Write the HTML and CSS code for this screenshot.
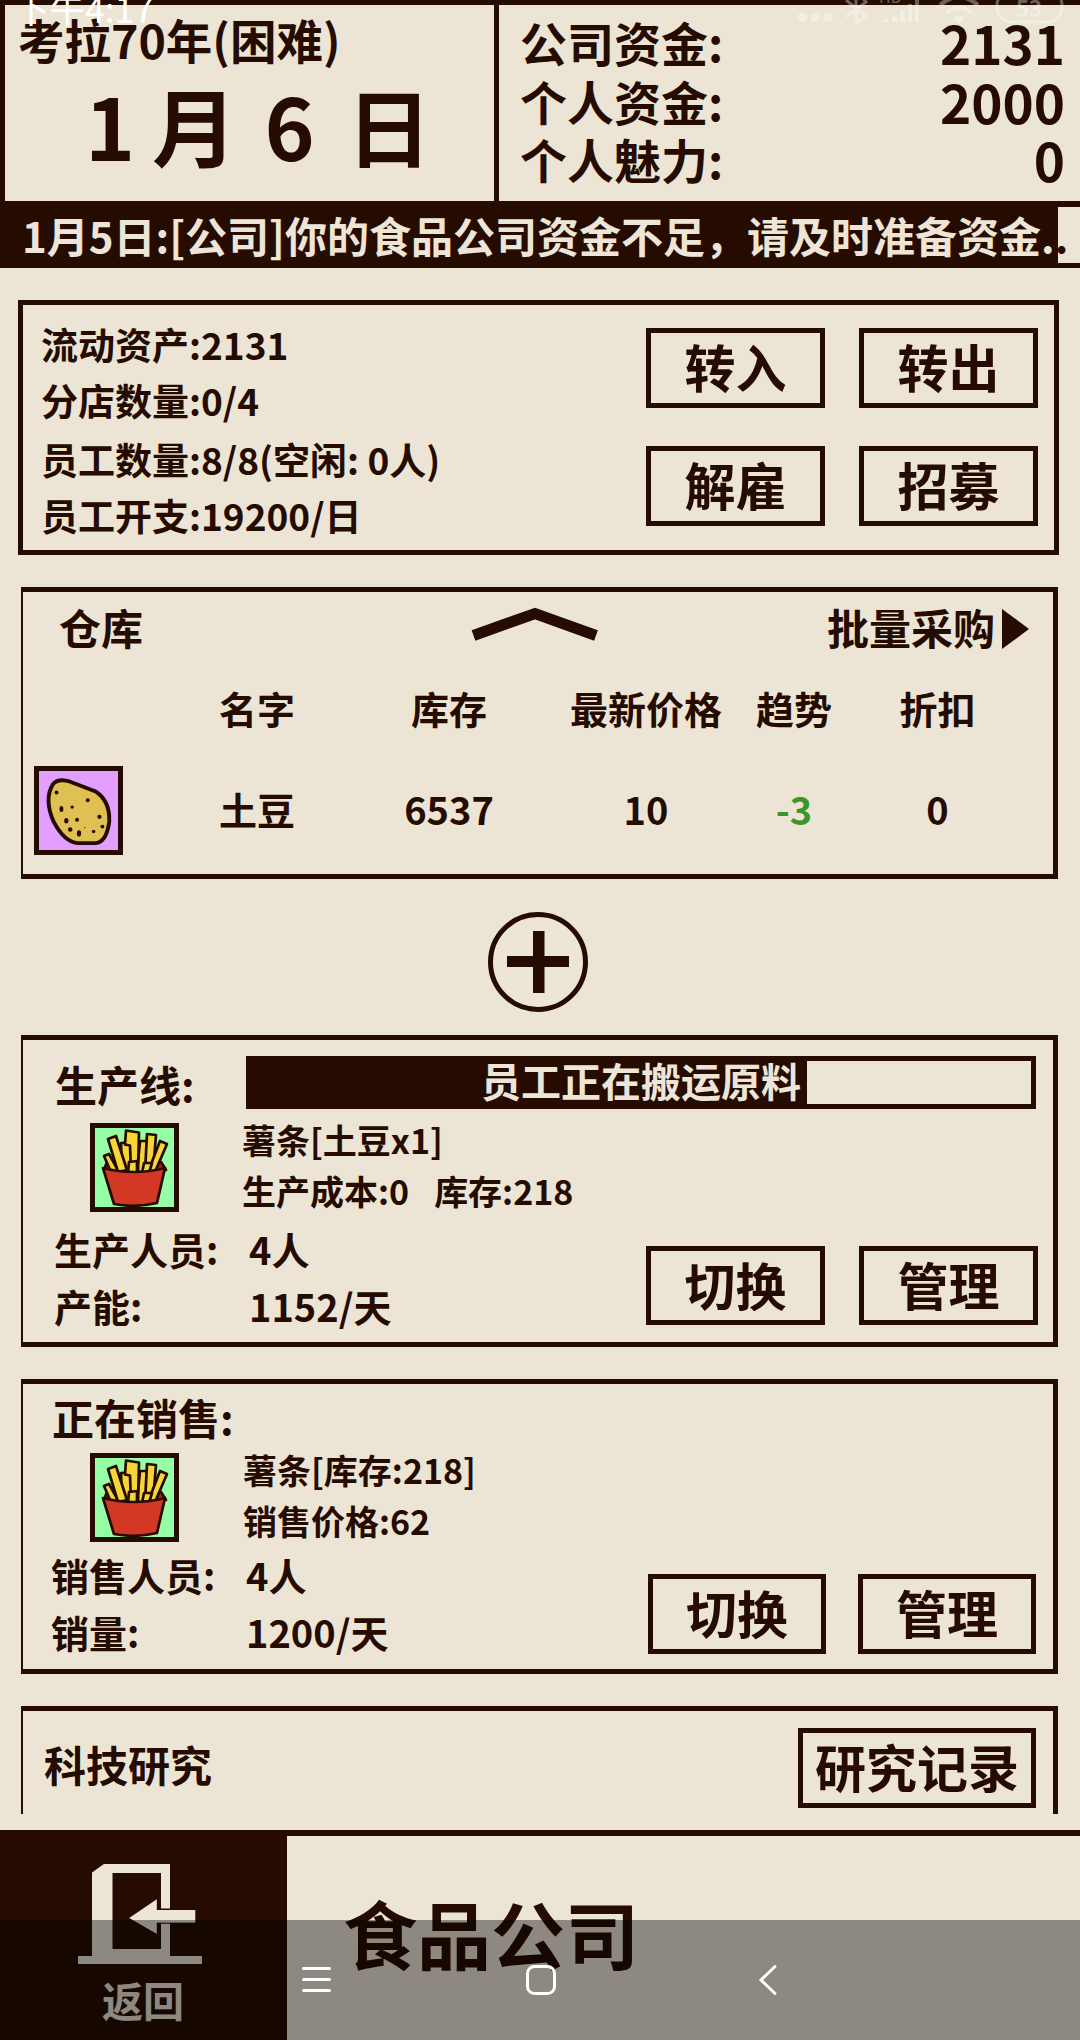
FILE: index.html
```html
<!DOCTYPE html>
<html lang="zh-CN">

<head>
  <meta charset="UTF-8">
  <meta name="viewport" content="width=device-width, initial-scale=1.0">
  <title>食品公司</title>
  <link rel="stylesheet" href="styles.css">
</head>

<body>
  <!-- Shared drawings -->
  <svg class="defs" width="0" height="0">
    <symbol id="fries" viewBox="0 0 79 79">
      <g stroke="#260c00" stroke-width="2.700" stroke-linejoin="round">
        <path fill="#a82418" d="M9 42l3-8h54l5 8z" />
        <g fill="#f6d536">
          <path d="M9 28l5-2 10 18h-8z" />
          <path d="M26 15l12-1 2 32H27z" />
          <path d="M45 13h8l-2 31h-9z" />
          <path d="M31 2.500l13 2-1 39h-7l-1-26-5-1z" />
          <path d="M13 11l8-3 11 34-9 2z" />
          <path d="M52 6l9 1-3 37h-8z" />
          <path d="M65 13l7 3-12 28h-7z" />
          <path d="M34 34l8-1v12h-9z" />
          <path d="M49 35h8l-3 10h-7z" />
        </g>
        <path fill="#d23824" d="M8 40q31 8 62 0l-8 35q-22 5-43 1z" />
      </g>
    </symbol>
  </svg>

  <div class="screen">
    <header class="header">
      <section class="date-box">
        <p class="year">考拉70年(困难)</p>
        <p class="date"><span>1</span><span>月</span><span>6</span><span>日</span></p>
      </section>
      <section class="funds">
        <p><span>公司资金:</span><b>2131</b></p>
        <p><span>个人资金:</span><b>2000</b></p>
        <p><span>个人魅力:</span><b>0</b></p>
      </section>
    </header>

    <div class="ticker"><p>1月5日:[公司]你的食品公司资金不足，请及时准备资金<span>.</span><span class="dot">.</span></p></div>

    <main class="content">
      <section class="panel overview">
        <div class="stats">
          <p>流动资产:2131</p>
          <p>分店数量:0/4</p>
          <p>员工数量:8/8(空闲: 0人)</p>
          <p>员工开支:19200/日</p>
        </div>
        <div class="actions">
          <button>转入</button>
          <button>转出</button>
          <button>解雇</button>
          <button>招募</button>
        </div>
      </section>

      <section class="panel thin warehouse">
        <div class="warehouse-head">
          <h2>仓库</h2>
          <svg class="chevron" viewBox="0 0 128 36" width="128" height="36">
            <path d="M2.500 29.500L64 7.500L125 29.500" fill="none" stroke="#260c00" stroke-width="11" />
          </svg>
          <h2 class="bulk">批量采购<svg viewBox="0 0 27 40" width="27" height="40"><path d="M0 0l27 20L0 40z" fill="#260c00" /></svg></h2>
        </div>
        <div class="goods goods-title">
          <span></span><span>名字</span><span>库存</span><span>最新价格</span><span>趋势</span><span>折扣</span>
        </div>
        <div class="goods">
          <div class="icon potato">
            <svg viewBox="0 0 79 81" width="79" height="79">
              <path d="M13 14Q18 7 31 11L57 21Q72 31 71 52Q68 74 56 74H39Q25 73 14 52Q4 29 13 14Z" fill="#dfc052" stroke="#260c00" stroke-width="4" />
              <g fill="#260c00">
                <circle cx="17" cy="22" r="2" /><circle cx="49" cy="30" r="2" /><circle cx="33" cy="37" r="1.700" />
                <ellipse cx="22" cy="39" rx="2" ry="3" /><ellipse cx="27" cy="51" rx="2.200" ry="2.800" /><circle cx="38" cy="50" r="2" />
                <circle cx="61" cy="47" r="2.200" /><circle cx="64" cy="57" r="2" /><circle cx="55" cy="62" r="1.800" />
                <circle cx="31" cy="60" r="2.300" /><ellipse cx="40" cy="64" rx="2.200" ry="3.200" /><circle cx="46" cy="58" r=".6" />
              </g>
            </svg>
          </div>
          <span>土豆</span><span>6537</span><span>10</span><span class="down">-3</span><span>0</span>
        </div>
      </section>

      <svg class="add" viewBox="0 0 100 100" width="100" height="100">
        <circle cx="50" cy="50" r="47.500" fill="#ece5d8" stroke="#260c00" stroke-width="5" />
        <path d="M19 44h62v11H19zM45 19h11.500v62H45z" fill="#260c00" />
      </svg>

      <section class="panel thin line">
        <div class="line-head">
          <h2>生产线:</h2>
          <div class="progress">
            <div class="bar" style="width: 71.300%"></div>
            <span>员工正在搬运原料</span>
          </div>
        </div>
        <div class="product">
          <div class="icon"><svg width="79" height="79"><use href="#fries" /></svg></div>
          <div>
            <p>薯条[土豆x1]</p>
            <p>生产成本:0<span class="stock">库存:218</span></p>
          </div>
        </div>
        <div class="line-foot">
          <div class="pairs">
            <span>生产人员:</span><span>4人</span>
            <span>产能:</span><span>1152/天</span>
          </div>
          <div class="buttons">
            <button>切换</button>
            <button>管理</button>
          </div>
        </div>
      </section>

      <section class="panel thin sale">
        <h2>正在销售:</h2>
        <div class="product">
          <div class="icon"><svg width="79" height="79"><use href="#fries" /></svg></div>
          <div>
            <p>薯条[库存:218]</p>
            <p>销售价格:62</p>
          </div>
        </div>
        <div class="line-foot">
          <div class="pairs">
            <span>销售人员:</span><span>4人</span>
            <span>销量:</span><span>1200/天</span>
          </div>
          <div class="buttons">
            <button>切换</button>
            <button>管理</button>
          </div>
        </div>
      </section>

      <section class="panel thin research">
        <h2>科技研究</h2>
        <button>研究记录</button>
      </section>
    </main>

    <footer class="footer">
      <div class="back">
        <svg viewBox="0 0 124 100" width="124" height="100">
          <path fill="#ece5d8" fill-rule="evenodd" d="M14 8.500L26 0H92V92H124V100H0V92H14ZM34.500 9V85H83V9Z" />
          <path fill="#ece5d8" stroke="#260c00" stroke-width="1.400" d="M50 54L79.500 34V45.300H118V59H79.500V71Z" />
          <path fill="#ece5d8" d="M79 46h38v12.500H79z" />
        </svg>
        <span>返回</span>
      </div>
      <h1>食品公司</h1>
    </footer>

    <!-- Phone status bar, half cut off at the top -->
    <div class="status">
      <span>下午4:17</span>
      <svg viewBox="0 0 270 26" width="270" height="26" fill="none" stroke="#fff" stroke-width="3">
        <g fill="#fff" stroke="none">
          <circle cx="7" cy="17.500" r="4.700" /><circle cx="20" cy="17.500" r="4.700" /><circle cx="33" cy="17.500" r="4.700" />
          <path d="M86 22l7-5v5zM97 15h5v7h-5zM105 10h5v12h-5zM113 4h4v18h-4zM120 0h4v22h-4z" />
          <path d="M164 24l-6-6q6-4 12 0z" />
          <text x="84" y="3" font-size="16">HD</text>
          <text x="221" y="17" font-size="22" font-weight="bold">53</text>
        </g>
        <path d="M51 0L71 16L61 24V-10L71 2L51 17" />
        <path d="M151 13q13-11 26 0M145 5q19-16 38 0" stroke-width="4" />
        <rect x="202" y="-10" width="65" height="32" rx="15" />
      </svg>
    </div>

    <nav class="navbar">
      <svg viewBox="0 0 1080 120" width="1080" height="120" fill="none" stroke="#fff" stroke-width="3" stroke-linecap="round">
        <path d="M303.500 48.500h26M303.500 59.500h26M303.500 70.500h26" />
        <rect x="527.500" y="46.500" width="27" height="27" rx="7" />
        <path d="M775 46.500L761 60L775 73.500" />
      </svg>
    </nav>
  </div>
</body>

</html>
```
FILE: styles.css
```css
* {
  box-sizing: border-box;
}

body {
  margin: 0;
  font-family: "Noto Sans CJK SC", sans-serif;
  font-weight: bold;
  color: #260c00;
  background-color: #ece5d5;
}

p,
h1,
h2 {
  margin: 0;
  white-space: nowrap;
}

svg {
  display: block;
}

.defs {
  position: absolute;
}

.screen {
  position: relative;
  width: 1080px;
  height: 2040px;
  overflow: hidden;
  display: flex;
  flex-direction: column;
}

/* Header */
.header {
  display: flex;
  height: 201px;
  border-top: 5px solid #260c00;
  border-left: 5px solid #260c00;
}

.date-box {
  width: 494px;
  border-right: 5px solid #260c00;
}

.year {
  padding: 4px 0 0 13px;
  font-size: 46.500px;
  line-height: 60px;
}

.date {
  display: grid;
  grid-template-columns: 84px 85px 105px 94px;
  padding-left: 63px;
  font-size: 85px;
  line-height: 110px;
  text-align: center;
}

.funds {
  flex: 1;
  padding: 8px 15px 0 21px;
}

.funds p {
  display: flex;
  justify-content: space-between;
  font-size: 47px;
  line-height: 58.500px;
}

.funds b {
  font-size: 53px;
  font-weight: bold;
}

/* News ticker */
.ticker {
  height: 67px;
  border: 6px solid #260c00;
  border-right: 0;
  border-bottom-width: 5px;
  background: linear-gradient(to right, #260c00 1052px, #ece5d5 1052px);
}

.ticker p {
  padding-left: 16px;
  font-size: 42px;
  line-height: 56px;
  color: #ece5d8;
}

.ticker .dot {
  color: #260c00;
}

/* Panels */
.content {
  height: 1546px;
  padding-top: 32px;
  overflow: hidden;
}

.panel {
  margin: 0 22px 32px 21px;
  border: 5px solid #260c00;
}

.thin {
  border-left-width: 2px;
}

h2 {
  font-size: 42px;
  line-height: 50px;
}

button {
  width: 179px;
  height: 80px;
  padding: 0 0 4px;
  border: 5px solid #260c00;
  background: none;
  color: #260c00;
  font-family: inherit;
  font-size: 51px;
  font-weight: bold;
  line-height: 66px;
}

.icon {
  width: 89px;
  height: 89px;
  border: 5px solid #260c00;
  background-color: #96ffa5;
}

.overview {
  display: flex;
  justify-content: space-between;
  height: 255px;
  margin-left: 18px;
  margin-right: 21px;
  padding: 12px 16px 0 18px;
}

.stats {
  display: grid;
  grid-template-rows: 53px 59px 59px 53px;
  align-items: center;
  font-size: 37px;
  line-height: 50px;
}

.actions {
  display: grid;
  grid-template-columns: 179px 179px;
  gap: 38px 34px;
  align-content: start;
  padding-top: 11px;
}

/* Warehouse */
.warehouse {
  height: 292px;
  margin-bottom: 33px;
}

.warehouse-head {
  display: flex;
  align-items: flex-start;
  height: 70px;
  padding: 10px 24px 0 36px;
}

.chevron {
  margin: 4px 0 0 328px;
}

.bulk {
  display: flex;
  gap: 7px;
  align-items: center;
  margin-left: auto;
}

.bulk svg {
  margin-top: 3px;
}

.goods {
  display: grid;
  grid-template-columns: 134px 200px 184px 210px 86px 201px;
  align-items: center;
  height: 89px;
  font-size: 38px;
  line-height: 48px;
  text-align: center;
}

.goods span {
  padding-bottom: 4px;
}

.goods-title {
  height: 60px;
  margin: 18px 0 26px;
}

.potato {
  margin-left: 11px;
  background-color: #e29fff;
}

.down {
  color: #3c9628;
}

.add {
  margin: 0 0 23px 488px;
}

/* Production and sales */
.line {
  height: 312px;
  padding-top: 16px;
}

.line-head {
  display: flex;
  padding-left: 32px;
}

.line-head h2 {
  width: 191px;
  padding-top: 3px;
}

.progress {
  position: relative;
  width: 790px;
  height: 53px;
  border: 5px solid #260c00;
  font-size: 40px;
  line-height: 38px;
  text-align: center;
  color: #ece5d8;
}

.bar {
  height: 100%;
  background-color: #260c00;
}

.progress span {
  position: absolute;
  inset: 0;
}

.product {
  display: flex;
  gap: 63px;
  height: 103px;
  padding: 14px 0 0 67px;
  font-size: 34px;
  line-height: 51px;
}

.product p {
  position: relative;
  top: -9px;
}

.stock {
  margin-left: 25px;
}

.line-foot {
  display: flex;
  justify-content: space-between;
  padding: 8px 15px 0 31px;
}

.pairs {
  display: grid;
  grid-template-columns: 195px auto;
  font-size: 38px;
  line-height: 57px;
  white-space: nowrap;
}

.buttons {
  display: flex;
  gap: 34px;
  padding-top: 26px;
}

.line button {
  height: 79px;
}

.sale {
  height: 295px;
  padding-top: 8px;
}

.sale h2 {
  padding-left: 29px;
}

.sale .product {
  gap: 64px;
  height: 100px;
  padding-top: 11px;
}

.sale .line-foot {
  padding: 4px 17px 0 28px;
}

.sale .buttons {
  gap: 32px;
  padding-top: 28px;
}

.sale button {
  width: 178px;
}

/* The list is cut off above the footer */
.research {
  display: flex;
  justify-content: space-between;
  height: 140px;
  margin-bottom: 0;
  padding: 17px 17px 0 21px;
}

.research h2 {
  padding-top: 11px;
}

.research button {
  width: 238px;
}

/* Footer */
.footer {
  display: flex;
  height: 210px;
  margin-top: 16px;
  border-top: 6px solid #260c00;
}

.back {
  width: 287px;
  padding: 28px 0 0 78px;
  background-color: #260c00;
  color: #ece5d8;
}

.back span {
  display: block;
  padding-left: 24px;
  font-size: 41px;
  line-height: 70px;
}

h1 {
  padding: 41px 0 0 56px;
  font-size: 74px;
  line-height: 110px;
}

.status {
  position: absolute;
  top: 0;
  left: 14px;
  right: 0;
  display: flex;
  height: 30px;
  color: #fff;
  font-size: 35.500px;
  font-weight: 400;
  line-height: 16px;
}

.status svg {
  margin-left: auto;
  margin-right: 15px;
  opacity: 0.35;
}

.navbar {
  position: absolute;
  left: 0;
  bottom: 0;
  height: 120px;
  background-color: rgba(0, 0, 0, 0.4);
}
```
